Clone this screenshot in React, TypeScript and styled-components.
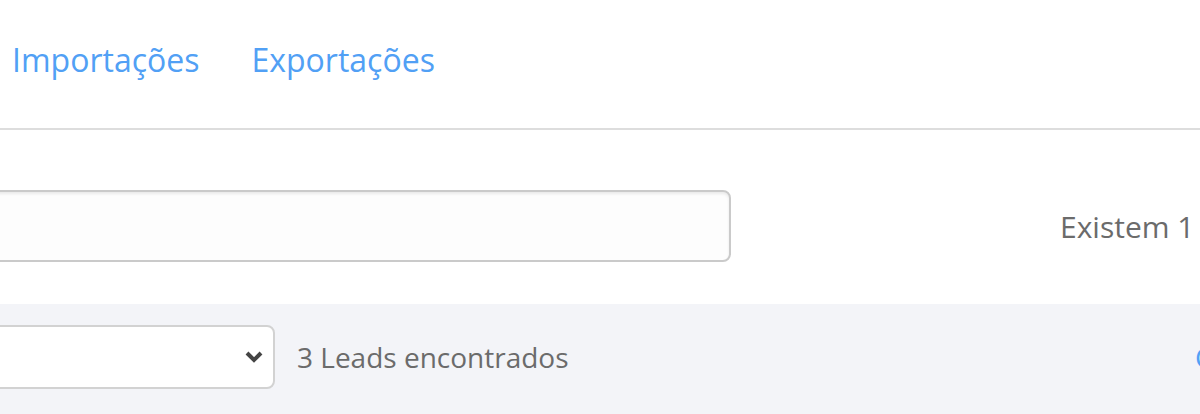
import styled, { createGlobalStyle } from 'styled-components';

const GlobalStyle = createGlobalStyle`
  html, body {
    margin: 0;
    padding: 0;
    background: #ffffff;
    overflow: hidden;
  }
  body {
    font-family: 'Open Sans', 'Liberation Sans', sans-serif;
  }
`;

const Page = styled.div`
  width: 1480px;
  margin-left: -40px;
`;

const Tabs = styled.nav`
  display: flex;
  align-items: flex-start;
  gap: 52px;
  height: 130px;
  padding: 38px 0 0 52px;
  box-sizing: border-box;
  border-bottom: 2px solid #dddddd;
`;

const TabLink = styled.a`
  font-size: 32px;
  line-height: 44px;
  color: #51a0f5;
  text-decoration: none;
  white-space: nowrap;
`;

const SearchRow = styled.div`
  display: flex;
  align-items: center;
  gap: 329px;
  padding: 60px 0 42px;
`;

const SearchInput = styled.input`
  width: 771px;
  height: 72px;
  box-sizing: border-box;
  border: 2px solid #cacaca;
  border-radius: 8px;
  background: #fdfdfd;
  box-shadow: inset 0 2px 3px rgba(0, 0, 0, 0.08);
  font-family: inherit;
  font-size: 28px;
  padding: 0 20px;
  outline: none;
`;

const Count = styled.span`
  font-size: 30px;
  color: #6b6b6b;
  white-space: nowrap;
`;

const FilterBar = styled.div`
  display: grid;
  grid-template-columns: 315px 876px auto;
  column-gap: 22px;
  align-items: center;
  background: #f3f4f8;
  padding: 21px 0 40px;
`;

const SelectBox = styled.div`
  position: relative;
  height: 64px;
  box-sizing: border-box;
  border: 2px solid #d2d2d2;
  border-radius: 8px;
  background: #ffffff;
`;

const Chevron = styled.svg`
  position: absolute;
  right: 9px;
  top: 50%;
  transform: translateY(-50%);
`;

const Found = styled.span`
  font-size: 28px;
  color: #6b6b6b;
  white-space: nowrap;
`;

const ActionLink = styled.a`
  font-size: 28px;
  color: #51a0f5;
  white-space: nowrap;
  text-decoration: none;
`;

export default function App() {
  return (
    <>
      <GlobalStyle />
      <Page>
        <Tabs>
          <TabLink href="#">Importações</TabLink>
          <TabLink href="#">Exportações</TabLink>
        </Tabs>
        <SearchRow>
          <SearchInput type="text" />
          <Count>Existem 1 leads</Count>
        </SearchRow>
        <FilterBar>
          <SelectBox>
            <Chevron width="20" height="14" viewBox="0 0 20 14">
              <path d="M3 3 L10 10 L17 3" fill="none" stroke="#444" strokeWidth="4" />
            </Chevron>
          </SelectBox>
          <Found>3 Leads encontrados</Found>
          <ActionLink href="#">Colunas</ActionLink>
        </FilterBar>
      </Page>
    </>
  );
}
